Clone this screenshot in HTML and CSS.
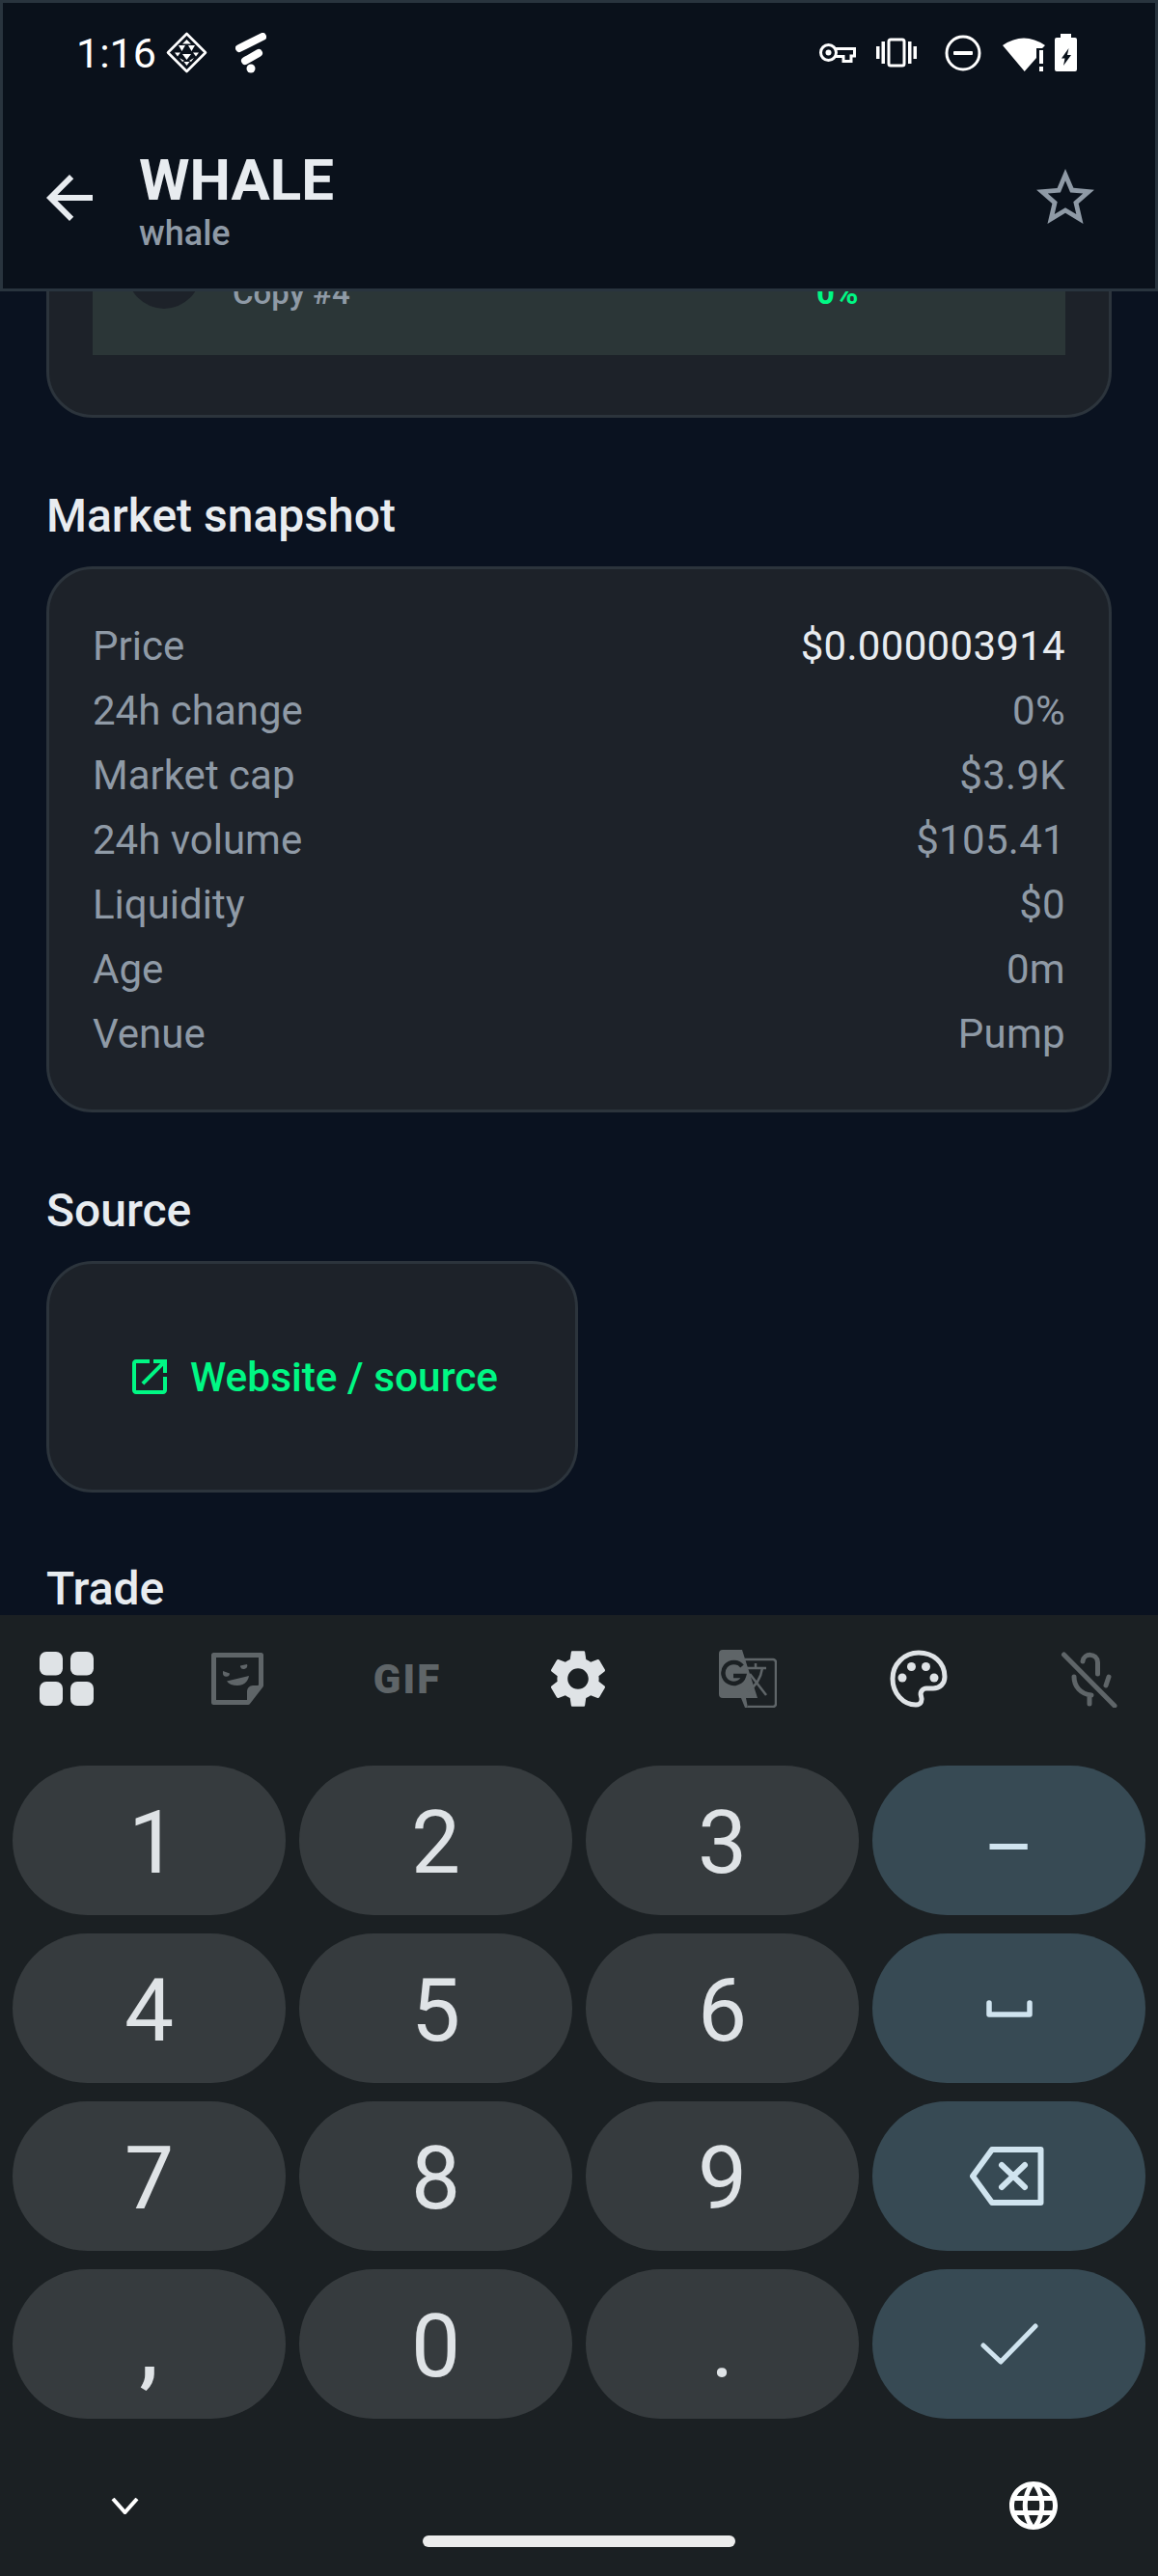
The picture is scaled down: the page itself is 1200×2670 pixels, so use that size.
FILE: index.html
```html
<!DOCTYPE html>
<html lang="en">
<head>
<meta charset="utf-8">
<title>WHALE</title>
<link rel="stylesheet" href="styles.css">
</head>
<body>
<div class="screen">
  <header class="header">
    <div class="status">
      <span class="time">1:16</span>
      <svg class="ic-diamond" width="43" height="43" viewBox="0 0 43 43"><path class="line" stroke-width="2.6" stroke-linejoin="round" d="M21.5 2 41 21.5 21.5 41 2 21.5Z"/><path class="solid" d="M21.5 8 26 12.5H17ZM13 14h7l-3.5 6ZM23 14h7l-3.5 6ZM9 21.5h6l-3 4ZM28 21.5h6l-3 4ZM17 23h9l-4.500 6ZM14 27l5 3-2 1ZM29 27l-5 3 2 1ZM21.500 35l-3-4h6Z"/></svg>
      <svg class="ic-fan" width="32" height="42" viewBox="0 0 32 42"><path class="line" stroke-width="8" stroke-linecap="round" d="M4 16 28 4M10 29 24 21"/><circle class="solid" cx="16" cy="37" r="4.500"/></svg>
      <div class="status-right">
        <svg class="ic-key" width="38" height="21" viewBox="0 0 38 21"><circle class="line" stroke-width="3" cx="9.500" cy="10.500" r="8"/><circle class="solid" cx="9.500" cy="10.500" r="3"/><path class="line" stroke-width="3" d="M17 6.500H36.500V14H33V19.500H25V14.500H17"/></svg>
        <svg class="ic-vib" width="42" height="31" viewBox="0 0 42 31"><rect class="line" stroke-width="3" x="13" y="2" width="16" height="27" rx="2"/><path class="solid" d="M0 9h3.500v13H0ZM5.500 4H9v23H5.500ZM33 4h3.500v23H33ZM38.500 9H42v13h-3.500Z"/></svg>
        <svg class="ic-dnd" width="38" height="38" viewBox="0 0 38 38"><circle class="line" stroke-width="3" cx="19" cy="19" r="17"/><rect class="solid" x="9" y="17" width="20" height="4" rx="1"/></svg>
        <svg class="ic-wifi" width="44" height="38" viewBox="0 0 44 38"><path class="solid" d="M0 11Q22-4 44 11L41 14H35V24L22.700 38Z"/><path class="solid" d="M38 16h4v14h-4ZM38 33h4v5h-4Z"/></svg>
        <svg class="ic-batt" width="23" height="39" viewBox="0 0 23 39"><path class="solid" fill-rule="evenodd" d="M6 0h11v4h4a2 2 0 0 1 2 2v31a2 2 0 0 1-2 2H2a2 2 0 0 1-2-2V6a2 2 0 0 1 2-2h4ZM14.500 15 7 25.500h3.500L9 33l8-11h-4Z"/></svg>
      </div>
    </div>
    <div class="toolbar">
      <svg class="back" width="72" height="72" viewBox="0 0 24 24"><path d="M20 11H7.830l5.590-5.590L12 4l-8 8 8 8 1.410-1.410L7.830 13H20v-2z"/></svg>
      <div class="titles">
        <h1 class="title">WHALE</h1>
        <p class="subtitle">whale</p>
      </div>
      <svg class="star" width="72" height="72" viewBox="0 0 24 24"><path d="M22 9.240l-7.190-.62L12 2 9.190 8.630 2 9.240l5.460 4.730L5.820 21 12 17.270 18.180 21l-1.630-7.030L22 9.240zM12 15.400l-3.760 2.270 1-4.280-3.320-2.880 4.380-.38L12 6.100l1.710 4.040 4.380.38-3.320 2.880 1 4.280L12 15.400z"/></svg>
    </div>
  </header>

  <main class="main">
    <section class="card holdings">
      <div class="holding">
        <div class="avatar"></div>
        <span class="holding-name">Copy #4</span>
        <span class="holding-pct">0%</span>
      </div>
    </section>

    <h2 class="heading">Market snapshot</h2>
    <section class="card snapshot">
      <div class="row"><span>Price</span><span class="value strong">$0.000003914</span></div>
      <div class="row"><span>24h change</span><span class="value">0%</span></div>
      <div class="row"><span>Market cap</span><span class="value">$3.9K</span></div>
      <div class="row"><span>24h volume</span><span class="value">$105.41</span></div>
      <div class="row"><span>Liquidity</span><span class="value">$0</span></div>
      <div class="row"><span>Age</span><span class="value">0m</span></div>
      <div class="row"><span>Venue</span><span class="value">Pump</span></div>
    </section>

    <h2 class="heading">Source</h2>
    <section class="card source">
      <svg class="link-ic" width="48" height="48" viewBox="0 0 24 24"><path d="M19 19H5V5h7V3H5c-1.110 0-2 .9-2 2v14c0 1.100.89 2 2 2h14c1.100 0 2-.9 2-2v-7h-2v7zM14 3v2h3.590l-9.830 9.830 1.410 1.410L19 6.410V10h2V3h-7z"/></svg>
      <span class="link-text">Website / source</span>
    </section>

    <h2 class="heading heading-trade">Trade</h2>
  </main>

  <div class="keyboard">
    <div class="kb-tools">
      <svg class="tool" width="60" height="60" viewBox="0 0 60 60"><g class="tool-on"><rect x="2" y="2" width="24" height="24.500" rx="7"/><rect x="34" y="2" width="24" height="24.500" rx="7"/><rect x="2" y="33" width="24" height="25" rx="7"/><rect x="34" y="33" width="24" height="25" rx="7"/></g></svg>
      <svg class="tool" width="60" height="60" viewBox="0 0 60 60"><path class="tool-line" stroke-width="5" stroke-linejoin="round" d="M5.500 5.500H54.500V37L41 54.500H5.500Z"/><path class="tool-off" d="M55 37H46a6 6 0 0 0-6 6V55ZM15 22l7 2.500a3.500 3.500 0 0 1-7-.5ZM33 16.500l7-1.500a3.500 3.500 0 0 1-7 2.500ZM19 32.500 42 27c-1 7-7 10-12 10-5 0-9-1.500-11-4.500Z"/></svg>
      <span class="tool tool-gif">GIF</span>
      <svg class="tool" width="60" height="60" viewBox="2 2 20 20"><path class="tool-on" d="M19.140 12.940c.04-.3.06-.61.06-.94 0-.32-.02-.64-.07-.94l2.030-1.580c.18-.14.23-.41.12-.61l-1.920-3.320c-.12-.22-.37-.29-.59-.22l-2.390.96c-.5-.38-1.030-.7-1.620-.94l-.36-2.540c-.04-.24-.24-.41-.48-.41h-3.840c-.24 0-.43.17-.47.41l-.36 2.540c-.59.24-1.130.57-1.620.94l-2.390-.96c-.22-.08-.47 0-.59.22L2.740 8.870c-.12.21-.08.47.12.61l2.030 1.580c-.05.3-.09.63-.09.94s.02.64.07.94l-2.030 1.580c-.18.14-.23.41-.12.61l1.920 3.320c.12.22.37.29.59.22l2.390-.96c.5.38 1.030.7 1.620.94l.36 2.540c.05.24.24.41.48.41h3.840c.24 0 .44-.17.47-.41l.36-2.540c.59-.24 1.130-.56 1.620-.94l2.390.96c.22.08.47 0 .59-.22l1.920-3.320c.12-.22.07-.47-.12-.61l-2.010-1.580zM12 15.600c-1.980 0-3.600-1.620-3.600-3.600s1.620-3.600 3.600-3.600 3.600 1.620 3.600 3.600-1.620 3.600-3.600 3.600z"/></svg>
      <svg class="tool" width="60" height="60" viewBox="0 0 60 60"><path class="tool-off" d="M4 0H24L40 50H28L30 60H27L23 50H4a4 4 0 0 1-4-4V4a4 4 0 0 1 4-4Z"/><path class="tool-line" stroke-width="2.500" d="M27 10H56a3 3 0 0 1 3 3V56a3 3 0 0 1-3 3H30"/><path class="g-mark" stroke-width="4.500" d="M24 17A11 11 0 1 0 26 27H15"/><path class="tool-line" stroke-width="2.500" d="M28 19H49M38 14V19M45 19C43 32 36 39 30 43M32 25 49 47"/></svg>
      <svg class="tool" width="60" height="60" viewBox="0 0 60 60"><path class="tool-on-line" stroke-width="5" d="M30 3C15 3 3 15 3 30 3 45 14 57 27 57 33 57 34 52 32.500 48 31 44 34 40 38 40H45C52 40 57 35 57 28 57 13 45 3 30 3Z"/><g class="tool-on"><circle cx="13" cy="29" r="4.500"/><circle cx="22.500" cy="17.500" r="4.500"/><circle cx="37.500" cy="17.500" r="4.500"/><circle cx="46" cy="29" r="4.500"/></g></svg>
      <svg class="tool" width="60" height="60" viewBox="0 0 60 60"><path class="tool-line" stroke-width="5" stroke-linecap="round" d="M4.500 5 57 58M24 12C25 3 39 3 39.500 13V25M51 28 48 37M15 28C15 38 22 46 33 47M31 47V56"/></svg>
    </div>
    <div class="keys">
      <div class="key key-one">1</div><div class="key">2</div><div class="key">3</div>
      <div class="key key-alt key-dash">–</div>
      <div class="key">4</div><div class="key">5</div><div class="key">6</div>
      <div class="key key-alt"><svg width="48" height="18" viewBox="0 0 48 18"><path class="alt-line" stroke-width="5.500" stroke-linecap="round" stroke-linejoin="round" d="M3 3V15H45V3"/></svg></div>
      <div class="key">7</div><div class="key">8</div><div class="key">9</div>
      <div class="key key-alt key-back"><svg width="78" height="63" viewBox="0 0 78 63"><path class="alt-line" stroke-width="6" stroke-linejoin="round" d="M24 4H74.500V59H24L4 31.500Z"/><path class="alt-line" stroke-width="6" stroke-linecap="round" d="M34 20 58 43M58 20 34 43"/></svg></div>
      <div class="key key-comma">,</div><div class="key">0</div><div class="key">.</div>
      <div class="key key-alt"><svg width="60" height="44" viewBox="0 0 60 44"><path class="alt-line" stroke-width="5" stroke-linecap="round" stroke-linejoin="round" d="M3 23 21 40 57 3"/></svg></div>
    </div>
    <div class="kb-bottom">
      <div class="kb-nav">
        <svg class="chev" width="29" height="17" viewBox="0 0 29 17"><path d="M2 1 14.500 15 27 1"/></svg>
        <svg class="globe" width="50" height="50" viewBox="2 2 20 20"><path d="M11.990 2C6.470 2 2 6.480 2 12s4.470 10 9.990 10C17.520 22 22 17.520 22 12S17.520 2 11.990 2zm6.930 6h-2.950c-.32-1.250-.78-2.450-1.380-3.560 1.840.63 3.370 1.910 4.330 3.560zM12 4.040c.83 1.200 1.480 2.530 1.910 3.960h-3.820c.43-1.430 1.080-2.760 1.910-3.960zM4.260 14C4.100 13.360 4 12.690 4 12s.1-1.360.26-2h3.380c-.08.66-.14 1.320-.14 2 0 .68.06 1.340.14 2H4.260zm.82 2h2.950c.32 1.250.78 2.450 1.380 3.560-1.840-.63-3.370-1.900-4.330-3.560zm2.950-8H5.080c.96-1.660 2.490-2.930 4.330-3.560C8.810 5.550 8.350 6.750 8.030 8zM12 19.960c-.83-1.200-1.480-2.530-1.910-3.960h3.820c-.43 1.430-1.080 2.760-1.910 3.960zM14.340 14H9.660c-.09-.66-.16-1.320-.16-2 0-.68.07-1.350.16-2h4.680c.09.65.16 1.320.16 2 0 .68-.07 1.340-.16 2zm.25 5.560c.6-1.110 1.060-2.310 1.380-3.560h2.950c-.96 1.650-2.490 2.930-4.330 3.560zM16.360 14c.08-.66.14-1.320.14-2 0-.68-.06-1.340-.14-2h3.380c.16.64.26 1.310.26 2s-.1 1.360-.26 2h-3.380z"/></svg>
      </div>
      <div class="home-bar"></div>
    </div>
  </div>
</div>
</body>
</html>
```

FILE: styles.css
```css
* { box-sizing: border-box; }
html, body { margin: 0; padding: 0; }
body { font-family: Roboto, "Noto Sans", sans-serif; background: #0a1220; color: #e8ecf0; }

.screen { width: 1200px; height: 2670px; display: flex; flex-direction: column; overflow: hidden; }

/* header */
.header { flex: 0 0 302px; background: #0a111b; border: 3px solid #29343e; position: relative; z-index: 1; }
.status { height: 103px; display: flex; align-items: center; padding-left: 76px; }
.status svg { flex: none; }
.line { fill: none; stroke: #fff; }
.solid { fill: #fff; }
.time { font-size: 43px; line-height: 48px; color: #fff; width: 93px; }
.ic-fan { margin-left: 29px; }
.status-right { margin-left: auto; display: flex; align-items: center; padding-right: 81px; }
.ic-vib { margin-left: 21px; }
.ic-dnd { margin-left: 29px; }
.ic-wifi { margin-left: 22px; }
.ic-batt { margin-left: 10px; }

.toolbar { height: 193px; display: flex; align-items: center; padding: 5px 57px 0 33px; }
.back { fill: #e8ecf0; flex: none; }
.titles { margin-left: 36px; flex: 1; padding-top: 6px; }
.title { margin: 0; font-size: 60px; line-height: 66px; font-weight: 700; color: #e8ecf0; }
.subtitle { margin: 1px 0 0; font-size: 36px; line-height: 42px; font-weight: 500; color: #8f9aa6; }
.star { fill: #8f9aa6; flex: none; }

/* content */
.main { flex: 0 0 1372px; overflow: hidden; padding: 0 48px; }
.card { background: #1d2229; border: 3px solid #2c343c; border-radius: 48px; }
.holdings { margin-top: -137px; padding: 0 45px 62px; }
.holding { height: 200px; background: #2b3637; display: flex; align-items: flex-start; padding: 76px 0 0 36px; }
.avatar { width: 76px; height: 76px; border-radius: 50%; background: #1d2229; flex: none; }
.holding-name { flex: 0 0 605px; margin: 39px 0 0 33px; font-size: 33px; line-height: 42px; font-weight: 500; color: #8f9aa6; }
.holding-pct { margin-top: 39px; font-size: 33px; line-height: 42px; font-weight: 700; color: #00f884; }

.heading { margin: 74px 0 24px; font-size: 48px; line-height: 56px; font-weight: 500; color: #e8ecf0; }
.heading-trade { margin-top: 72px; }

.snapshot { padding: 46px 45px 45px; }
.row { height: 67px; display: flex; justify-content: space-between; align-items: center; font-size: 42px; color: #8f9aa6; }
.value { letter-spacing: .3px; }
.strong { color: #e8ecf0; }

.source { width: 551px; height: 240px; display: flex; align-items: center; justify-content: center; gap: 18px; }
.link-ic { fill: #00f884; flex: none; }
.link-text { font-size: 42.4px; font-weight: 500; color: #00f884; }

/* keyboard */
.keyboard { flex: 1; background: #1b2023; display: flex; flex-direction: column; padding-top: 36px; }
.kb-tools { display: flex; justify-content: space-between; padding: 0 42px 0 39px; height: 60px; margin-bottom: 60px; }
.tool { width: 60px; height: 60px; flex: none; }
.tool-on { fill: #dfe3e6; }
.tool-off { fill: #5f6568; }
.tool-line { fill: none; stroke: #5f6568; }
.tool-on-line { fill: none; stroke: #dfe3e6; }
.g-mark { fill: none; stroke: #1b2023; }
.tool-gif { display: flex; align-items: center; justify-content: center; font-size: 42px; font-weight: 900; letter-spacing: 2px; color: #5f6568; }

.keys { display: grid; grid-template-columns: repeat(4, 283px); grid-auto-rows: 155px; column-gap: 14px; row-gap: 19px; padding-left: 13px; }
.key { background: #363b3e; border-radius: 77.500px; display: flex; align-items: center; justify-content: center; padding-top: 5px; font-size: 91px; font-weight: 400; color: #dfe3e6; }
.key-one { padding-left: 8px; }
.key-comma { font-weight: 500; }
.key-alt { background: #374a54; color: #d0e4ef; padding-top: 0; }
.key-dash { font-size: 80px; font-weight: 400; padding-top: 14px; }
.key-back { padding-right: 5px; }
.alt-line { fill: none; stroke: #d0e4ef; }

.kb-bottom { flex: 1; padding-top: 65px; }
.kb-nav { height: 50px; display: flex; align-items: center; justify-content: space-between; padding: 0 104px 0 115px; }
.chev { fill: none; stroke: #fff; stroke-width: 4; }
.globe { fill: #fff; }
.home-bar { width: 324px; height: 12px; margin: 6px auto 0; border-radius: 6px; background: #ececec; }
```
